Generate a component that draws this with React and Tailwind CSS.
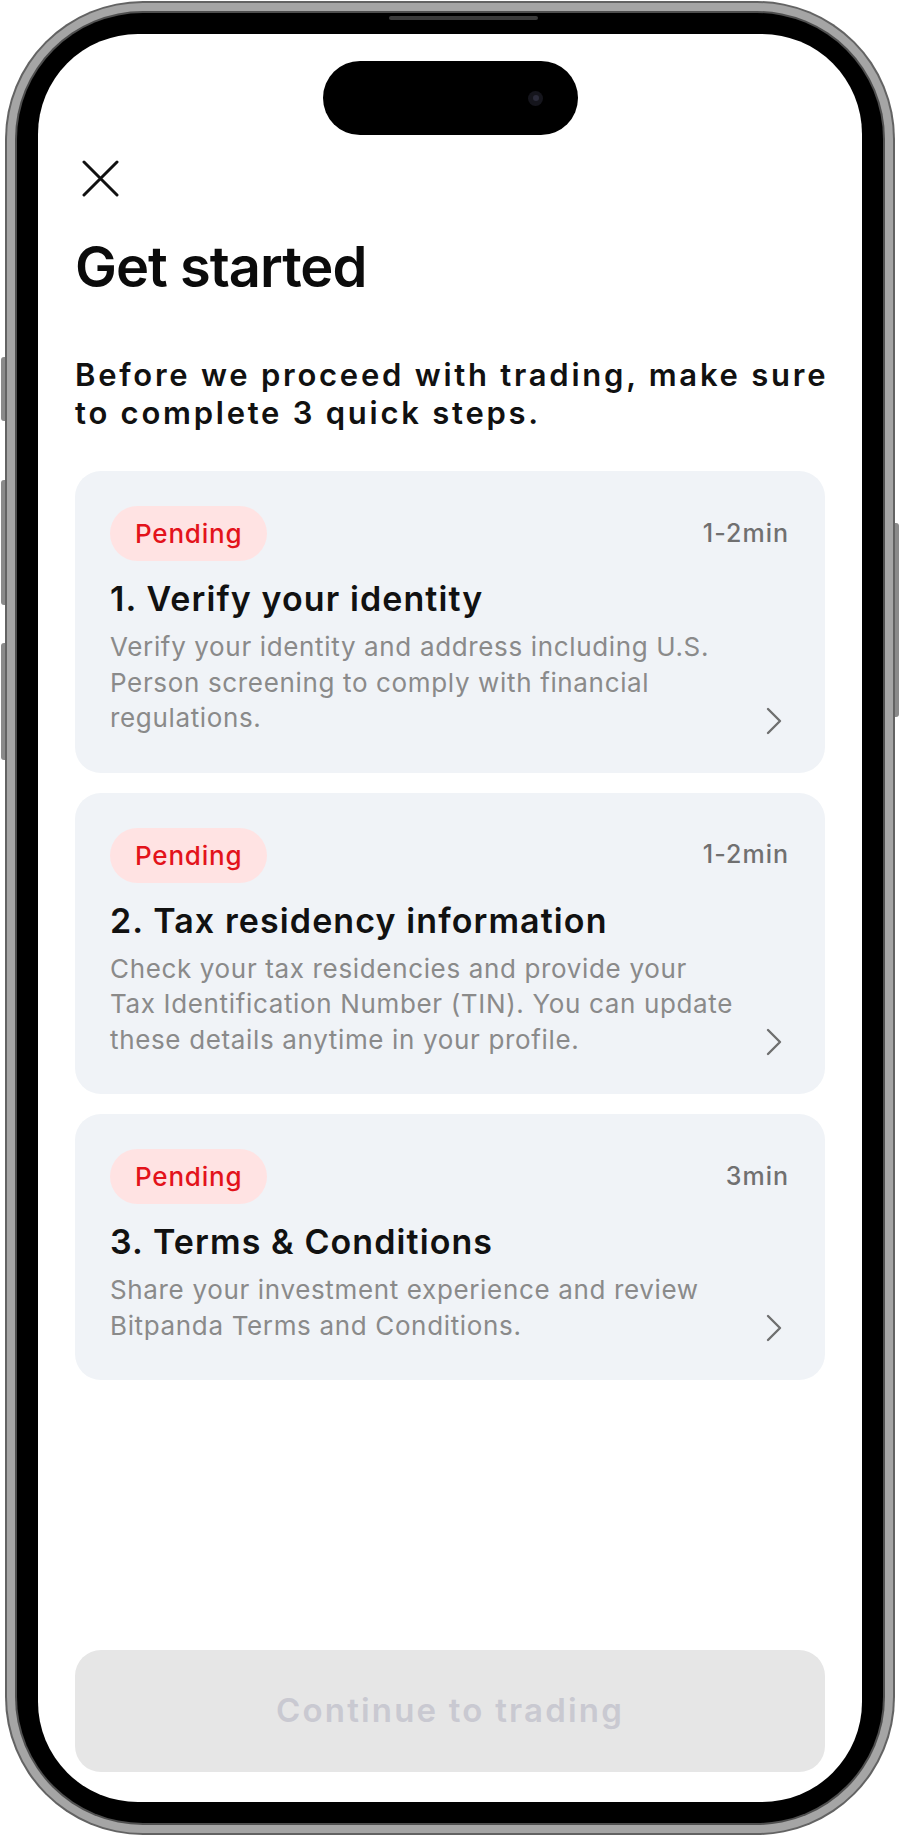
import React from 'react'

const steps = [
  {
    time: '1-2min',
    title: '1. Verify your identity',
    lines: ['Verify your identity and address including U.S.', 'Person screening to comply with financial', 'regulations.'],
  },
  {
    time: '1-2min',
    title: '2. Tax residency information',
    lines: ['Check your tax residencies and provide your', 'Tax Identification Number (TIN). You can update', 'these details anytime in your profile.'],
  },
  {
    time: '3min',
    title: '3. Terms & Conditions',
    lines: ['Share your investment experience and review', 'Bitpanda Terms and Conditions.'],
  },
]

function StepCard({ step }) {
  return (
    <div className="rounded-[26px] bg-[#f0f3f7] pl-[35px] pr-[36px] pt-[35px] pb-[37px]">
      <div className="flex items-center justify-between">
        <span className="inline-flex h-[55px] items-center rounded-full bg-[#ffe3e3] px-[25px] text-[26px] font-medium tracking-[0.8px] text-[#e3131b]">
          Pending
        </span>
        <span className="text-[25px] font-medium tracking-[1px] text-[#707070]">{step.time}</span>
      </div>
      <h2 className="mt-[17px] text-[34px] font-semibold leading-[42px] tracking-[1.1px] text-[#111]">{step.title}</h2>
      <div className="mt-[9px] flex items-end justify-between">
        <p className="text-[26px] leading-[35.5px] tracking-[0.65px] text-[#8a8a8a]">
          {step.lines.map((l, i) => (
            <span key={i} className="block whitespace-nowrap">{l}</span>
          ))}
        </p>
        <svg width="18" height="28" viewBox="0 0 18 28" className="mr-[6px] mb-[1px]" fill="none">
          <path d="M3 2 L15 14 L3 26" stroke="#6f6f6f" strokeWidth="2.4" strokeLinecap="round" strokeLinejoin="round" />
        </svg>
      </div>
    </div>
  )
}

export default function App() {
  return (
    <div className="relative h-[1836px] w-[900px] overflow-hidden bg-white font-['Inter','Noto_Sans',sans-serif]">
      {/* side buttons */}
      <div className="absolute left-[1px] top-[357px] h-[64px] w-[6px] rounded-l-[3px] bg-[#8a8a8a]" />
      <div className="absolute left-[1px] top-[480px] h-[125px] w-[6px] rounded-l-[3px] bg-[#8a8a8a]" />
      <div className="absolute left-[1px] top-[643px] h-[117px] w-[6px] rounded-l-[3px] bg-[#8a8a8a]" />
      <div className="absolute right-[1px] top-[523px] h-[194px] w-[6px] rounded-r-[3px] bg-[#8a8a8a]" />

      <div className="relative ml-[5px] mt-[1px] h-[1834px] w-[890px] rounded-[138px] bg-[#636363] p-[2px]">
        <div className="h-full w-full rounded-[136px] bg-[#a5a5a5] p-[8px]">
          <div className="h-full w-full rounded-[128px] bg-[#4f4f4f] p-[2px]">
            <div className="relative h-full w-full rounded-[126px] bg-black p-[21px]">
              <div className="absolute left-[372px] top-[3px] h-[4px] w-[149px] rounded-full bg-[#3c3c3c]" />
              <div className="relative flex h-full w-full flex-col overflow-hidden rounded-[100px] bg-white">
                {/* dynamic island */}
                <div className="absolute left-[285px] top-[27px] flex h-[74px] w-[255px] items-center justify-end rounded-full bg-black pr-[35px]">
                  <div className="flex h-[15px] w-[15px] items-center justify-center rounded-full bg-[#15151c]">
                    <div className="h-[6px] w-[6px] rounded-full bg-[#2b2b3a]" />
                  </div>
                </div>

                <div className="px-[37px]">
                  <svg width="37" height="37" viewBox="0 0 37 37" className="ml-[7px] mt-[126px]" fill="none">
                    <path d="M2 2 L35 35 M35 2 L2 35" stroke="#111" strokeWidth="3" strokeLinecap="round" />
                  </svg>
                  <h1 className="mt-[38px] text-[56px] font-semibold leading-[64px] tracking-[-1px] text-[#0b0b0b]">Get started</h1>
                  <p className="mt-[57px] text-[31px] font-semibold leading-[38px] tracking-[2.75px] text-[#111]">
                    <span className="block whitespace-nowrap">Before we proceed with trading, make sure</span>
                    <span className="block whitespace-nowrap">to complete 3 quick steps.</span>
                  </p>
                  <div className="mt-[39px] flex flex-col gap-[20px]">
                    {steps.map((s, i) => (
                      <StepCard key={i} step={s} />
                    ))}
                  </div>
                </div>

                <button className="mx-[37px] mb-[30px] mt-auto flex h-[122px] items-center justify-center rounded-[26px] bg-[#e6e6e6] text-[33px] font-semibold tracking-[2.2px] text-[#c9c9d1]">
                  Continue to trading
                </button>
              </div>
            </div>
          </div>
        </div>
      </div>
    </div>
  )
}
